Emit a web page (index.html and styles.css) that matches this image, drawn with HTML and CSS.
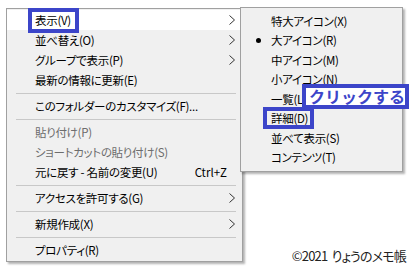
FILE: index.html
```html
<!DOCTYPE html>
<html lang="ja">
<head>
    <meta charset="UTF-8">
    <title>表示メニュー</title>
    <link rel="stylesheet" href="styles.css">
</head>
<body>
    <div class="page">
        <div class="menu">
            <div class="item active">
                <span class="label"><span class="mark">表示(V)</span></span>
                <svg class="arrow" width="6" height="10" viewBox="0 0 6 10"><polyline points="0.5,0.5 5.5,5 0.5,9.5"/></svg>
            </div>
            <div class="item">
                <span class="label">並べ替え(O)</span>
                <svg class="arrow" width="6" height="10" viewBox="0 0 6 10"><polyline points="0.5,0.5 5.5,5 0.5,9.5"/></svg>
            </div>
            <div class="item">
                <span class="label">グループで表示(P)</span>
                <svg class="arrow" width="6" height="10" viewBox="0 0 6 10"><polyline points="0.5,0.5 5.5,5 0.5,9.5"/></svg>
            </div>
            <div class="item">
                <span class="label">最新の情報に更新(E)</span>
            </div>
            <div class="sep"></div>
            <div class="item">
                <span class="label">このフォルダーのカスタマイズ(F)...</span>
            </div>
            <div class="sep"></div>
            <div class="item disabled">
                <span class="label">貼り付け(P)</span>
            </div>
            <div class="item disabled">
                <span class="label">ショートカットの貼り付け(S)</span>
            </div>
            <div class="item">
                <span class="label">元に戻す - 名前の変更(U)</span>
                <span class="key">Ctrl+Z</span>
            </div>
            <div class="sep"></div>
            <div class="item">
                <span class="label">アクセスを許可する(G)</span>
                <svg class="arrow" width="6" height="10" viewBox="0 0 6 10"><polyline points="0.5,0.5 5.5,5 0.5,9.5"/></svg>
            </div>
            <div class="sep"></div>
            <div class="item">
                <span class="label">新規作成(X)</span>
                <svg class="arrow" width="6" height="10" viewBox="0 0 6 10"><polyline points="0.5,0.5 5.5,5 0.5,9.5"/></svg>
            </div>
            <div class="sep"></div>
            <div class="item">
                <span class="label">プロパティ(R)</span>
            </div>

            <!-- 表示(V) のサブメニュー -->
            <div class="submenu">
                <div class="subitem"><span class="check"></span>特大アイコン(X)</div>
                <div class="subitem"><span class="check"><span class="dot"></span></span>大アイコン(R)</div>
                <div class="subitem"><span class="check"></span>中アイコン(M)</div>
                <div class="subitem"><span class="check"></span>小アイコン(N)</div>
                <div class="subitem"><span class="check"></span>一覧(L)</div>
                <div class="subitem"><span class="check"></span><span class="mark small">詳細(D)</span></div>
                <div class="subitem"><span class="check"></span>並べて表示(S)</div>
                <div class="subitem"><span class="check"></span>コンテンツ(T)</div>

                <div class="callout">クリックする</div>
            </div>
        </div>

        <div class="aside">
            <p class="credit">©2021&nbsp; りょうのメモ帳</p>
        </div>
    </div>
</body>
</html>
```

FILE: styles.css
```css
body {
    margin: 0;
    background: #fff;
    font-family: "Noto Sans CJK JP", "Noto Sans", sans-serif;
    color: #000;
}
.page {
    display: flex;
    height: 270px;
}
.menu {
    position: relative;
    align-self: flex-start;
    width: 237px;
    margin: 8px 0 0 6px;
    padding: 1px 0;
    box-sizing: border-box;
    background: #f0f0f0;
    border: 1px solid #a0a0a0;
    box-shadow: 2px 2px 2px rgba(0,0,0,0.3);
}
.item {
    display: flex;
    align-items: center;
    height: 20px;
    padding: 0 7px 0 28px;
    font-size: 11.5px;
    letter-spacing: -0.3px;
    font-feature-settings: "palt";
    white-space: nowrap;
}
.item.active {
    background: #fff;
}
.item.disabled {
    color: #6d6d6d;
}
.label {
    flex: 1;
}
.key {
    margin-right: 8px;
    letter-spacing: 0;
}
.arrow {
    display: block;
}
.arrow polyline {
    fill: none;
    stroke: #333;
    stroke-width: 1;
}
.sep {
    height: 1px;
    margin: 3px 6px 2px 9px;
    background: #c8c8c8;
}
.mark {
    display: inline-block;
    line-height: 17px;
    padding: 0 4px 0 3px;
    margin-left: -3px;
    outline: 4px solid #3c45c9;
}
.mark.small {
    line-height: 14px;
    padding: 0 2px 0 4px;
    margin-left: -4px;
}
.submenu {
    position: absolute;
    left: 233px;
    top: -2px;
    width: 163px;
    padding: 3px 0 4px;
    box-sizing: border-box;
    background: #f0f0f0;
    border: 1px solid #a0a0a0;
    box-shadow: 2px 2px 2px rgba(0,0,0,0.3);
}
.subitem {
    display: flex;
    align-items: center;
    height: 19.5px;
    font-size: 11.5px;
    letter-spacing: -0.3px;
    font-feature-settings: "palt";
    white-space: nowrap;
}
.check {
    display: flex;
    align-items: center;
    width: 30px;
    flex-shrink: 0;
}
.dot {
    width: 5px;
    height: 5px;
    margin-left: 15px;
    border-radius: 50%;
    background: #000;
}
.callout {
    position: absolute;
    left: 61px;
    top: 76px;
    width: 107px;
    height: 25px;
    box-sizing: border-box;
    padding-left: 3px;
    background: #fff;
    border: 4px solid #3c45c9;
    color: #3c45c9;
    font-size: 16px;
    font-weight: bold;
    line-height: 17px;
    white-space: nowrap;
}
.aside {
    flex: 1;
    display: flex;
    align-items: flex-end;
    justify-content: flex-end;
    padding: 0 4px 7px 0;
}
.credit {
    margin: 0;
    font-size: 13px;
    line-height: 15px;
    letter-spacing: -0.8px;
    color: #222;
    font-feature-settings: "palt";
}
```
